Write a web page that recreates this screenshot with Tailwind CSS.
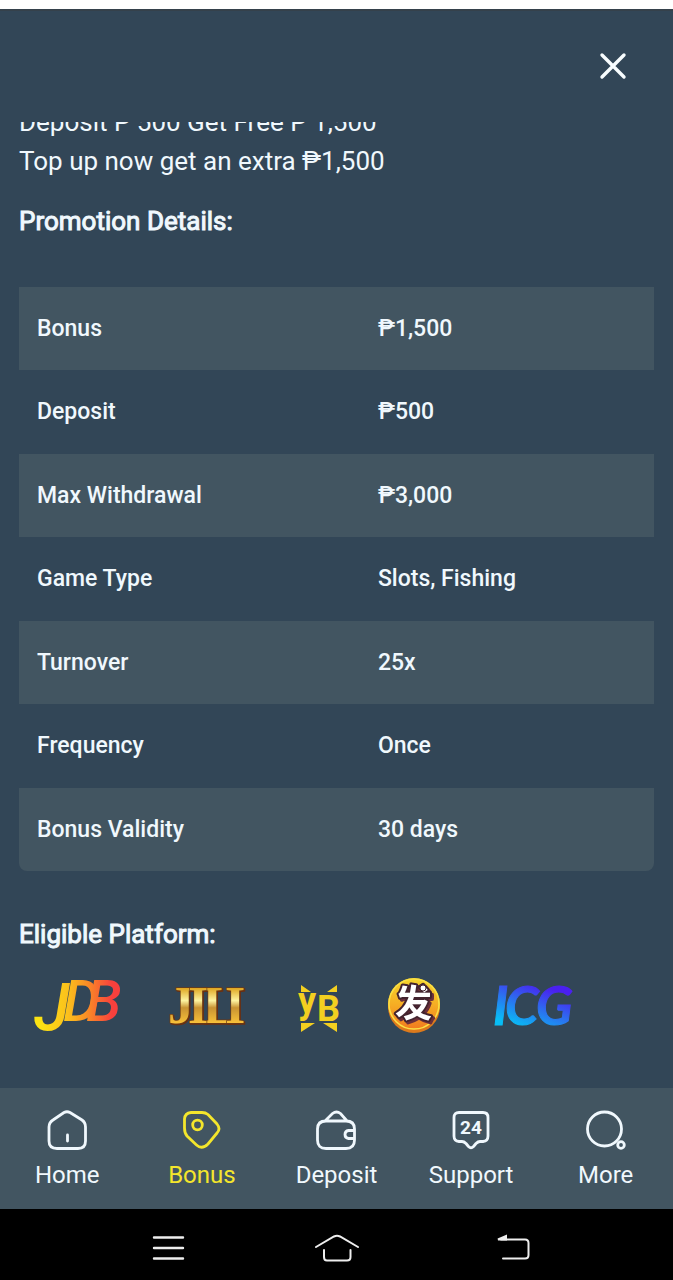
<!DOCTYPE html>
<html lang="en">
<head>
<meta charset="utf-8">
<meta name="viewport" content="width=device-width, initial-scale=1">
<title>Promotion Details</title>
<script src="https://cdn.jsdelivr.net/npm/@tailwindcss/browser@4"></script>
</head>
<body class="flex min-h-screen flex-col bg-[#324657] font-['Roboto','Noto_Sans',sans-serif] text-[#f0f8fd]">
<div class="h-[9px] bg-white"></div>
<header class="flex h-[113px] items-start justify-end border-t-2 border-[#35414b] px-10 pt-[35px]">
  <button type="button" aria-label="Close" class="flex size-10 items-center justify-center">
    <svg class="size-8" viewBox="0 0 32 32" fill="none" stroke="#f8fdff" stroke-width="3.400" stroke-linecap="round"><path d="M5 5 27 27M27 5 5 27"/></svg>
  </button>
</header>
<main class="flex-1 overflow-hidden px-[19px]">
  <div class="-mt-[19px] text-[26px] leading-[39px]">
    <p>Deposit P 500 Get Free P 1,500</p>
    <p>Top up now get an extra ₱1,500</p>
  </div>
  <h2 class="mt-[21px] text-[26px] leading-[39px] font-normal [-webkit-text-stroke:1px]">Promotion Details:</h2>
  <table class="mt-[46px] w-full table-fixed border-separate border-spacing-0 overflow-hidden rounded-b-lg text-left text-[23px] leading-8 font-medium">
    <tbody>
      <tr class="h-[83px] bg-[#425561]"><th scope="row" class="w-[54%] pl-[18px] font-medium">Bonus</th><td class="pl-4">₱1,500</td></tr>
      <tr class="h-[84px]"><th scope="row" class="pl-[18px] font-medium">Deposit</th><td class="pl-4">₱500</td></tr>
      <tr class="h-[83px] bg-[#425561]"><th scope="row" class="pl-[18px] font-medium">Max Withdrawal</th><td class="pl-4">₱3,000</td></tr>
      <tr class="h-[84px]"><th scope="row" class="pl-[18px] font-medium">Game Type</th><td class="pl-4">Slots, Fishing</td></tr>
      <tr class="h-[83px] bg-[#425561]"><th scope="row" class="pl-[18px] font-medium">Turnover</th><td class="pl-4">25x</td></tr>
      <tr class="h-[84px]"><th scope="row" class="pl-[18px] font-medium">Frequency</th><td class="pl-4">Once</td></tr>
      <tr class="h-[83px] bg-[#425561]"><th scope="row" class="pl-[18px] font-medium">Bonus Validity</th><td class="pl-4">30 days</td></tr>
    </tbody>
  </table>
  <h2 class="mt-11 text-[26px] leading-[39px] font-normal [-webkit-text-stroke:1px]">Eligible Platform:</h2>
  <div class="mt-[22px] flex gap-11 pl-[17px]">
    <svg class="h-[60px] w-[86px] overflow-visible" viewBox="0 0 86 60" role="img" aria-label="JDB">
      <defs><linearGradient id="jdb" gradientUnits="userSpaceOnUse" x1="4" y1="0" x2="84" y2="0"><stop offset="0" stop-color="#fbe313"/><stop offset=".35" stop-color="#fbc01c"/><stop offset=".6" stop-color="#f98a26"/><stop offset=".9" stop-color="#f8403d"/></linearGradient></defs>
      <g fill="url(#jdb)" font-family="Roboto" font-weight="500" font-style="italic">
        <text x="-2" y="54" font-size="66">J</text>
        <text x="27" y="45" font-size="58">D</text>
        <text x="50" y="45" font-size="58">B</text>
      </g>
    </svg>
    <svg class="h-[60px] w-[84px] overflow-visible drop-shadow-[1px_1px_0_#6b2f10]" viewBox="0 0 84 60" role="img" aria-label="JILI">
      <defs><linearGradient id="jili" gradientUnits="userSpaceOnUse" x1="0" y1="12" x2="0" y2="48"><stop offset="0" stop-color="#dfa51f"/><stop offset=".35" stop-color="#fdf3a0"/><stop offset=".55" stop-color="#c99332"/><stop offset="1" stop-color="#fbc43a"/></linearGradient></defs>
      <g font-family="Liberation Serif" font-weight="700" font-size="52" fill="url(#jili)" stroke="#6b3b16" stroke-width="1.500" paint-order="stroke"><text x="2" y="47">J</text><text x="37" y="47">L</text><text x="22" y="47">I</text><text x="59" y="47">I</text></g>
    </svg>
    <svg class="h-[60px] w-12" viewBox="0 0 48 60" role="img" aria-label="YB">
      <g fill="#f3cf20"><path d="M7 9 17 16H7ZM43 9 33 16H43ZM7 56V47H21ZM43 56V47H29Z"/>
      <g font-family="Roboto" font-weight="700" font-size="36"><text x="4" y="37">y</text><text x="23" y="45">B</text></g></g>
    </svg>
    <svg class="h-[60px] w-14" viewBox="0 0 56 60" role="img" aria-label="FA">
      <defs><linearGradient id="coin" x1="0" y1="0" x2="0" y2="1"><stop offset="0" stop-color="#f6d52c"/><stop offset=".5" stop-color="#f6ae24"/><stop offset="1" stop-color="#f2791f"/></linearGradient></defs>
      <circle cx="28" cy="31" r="26" fill="#dc7a1c"/><circle cx="28" cy="28" r="26" fill="url(#coin)"/><circle cx="28" cy="28" r="25" fill="none" stroke="#fae044" stroke-width="1.500"/>
      <text x="9" y="41" font-family="Noto Sans CJK SC" font-weight="700" font-size="37" fill="#fff" stroke="#43232e" stroke-width="4" stroke-linejoin="round" paint-order="stroke" class="drop-shadow-[2px_2px_0_#6b2f3a]">发</text>
      <circle cx="37" cy="12" r="3" fill="#fff" stroke="#43232e"/>
    </svg>
    <svg class="h-[60px] w-[90px]" viewBox="0 0 90 60" role="img" aria-label="ICG">
      <defs><linearGradient id="icg" gradientUnits="userSpaceOnUse" x1="35" y1="52" x2="52" y2="8"><stop offset="0" stop-color="#08bdf5"/><stop offset=".5" stop-color="#2b71ef"/><stop offset="1" stop-color="#4a20f0"/></linearGradient></defs>
      <text y="49" font-family="Lato" font-weight="700" font-style="italic" font-size="54" fill="url(#icg)" stroke="url(#icg)"><tspan x="7">I</tspan><tspan x="19">C</tspan><tspan x="50">G</tspan></text>
    </svg>
  </div>
</main>
<nav aria-label="Main" class="grid h-[121px] grid-cols-5 bg-[#425561] pt-[22px] text-center text-2xl">
  <a href="#home" class="flex flex-col items-center gap-[9px]">
    <svg class="size-10" viewBox="0 0 40 40" fill="none" stroke="currentColor" stroke-width="2.800" stroke-linecap="round"><path d="M17 2.500Q20 1 23 2.500L35 10Q38.500 12.500 38.500 17V31Q38.500 38.500 31 38.500H10Q2 38.500 2 31V17Q2 12.500 6 10ZM20.500 25V31"/></svg>Home</a>
  <a href="#bonus" aria-current="page" class="flex flex-col items-center gap-[9px] text-[#f4e62c]">
    <svg class="size-10" viewBox="0 0 40 40" fill="none" stroke="currentColor" stroke-width="2.800"><path d="M9 2.500H20Q23.500 2.500 26 4.500L35 14Q39 19 35 23L26 34Q20 40 14.500 35L5 26Q2.500 23 2.500 18V9Q3 3 9 2.500Z"/><circle cx="15.500" cy="15" r="4.800"/></svg>Bonus</a>
  <a href="#deposit" class="flex flex-col items-center gap-[9px]">
    <svg class="size-10" viewBox="0 0 40 40" fill="none" stroke="currentColor" stroke-width="2.800"><path d="M10 11H30Q38.500 11 38.500 19V30Q38.500 38.500 30 38.500H10Q1.500 38.500 1.500 30V19Q1.500 11 10 11ZM8.500 11.500 16.500 3.500Q20.500 .500 24.500 3.500L31.500 11.500M38 20.500H32.500Q29 21 29 24.500T32.500 28.500H38"/></svg>Deposit</a>
  <a href="#support" class="flex flex-col items-center gap-[9px]">
    <svg class="size-10" viewBox="0 0 40 40" fill="none" stroke="currentColor" stroke-width="2.800" stroke-linejoin="round"><path d="M8 2.500H32Q37 2.500 37 7.500V26Q37 31 32 31.500H29Q27 31.500 25 33.500L22.500 36.500Q20 39 17.500 36.500L15 33.500Q13 31.500 11 31.500H8Q3 31 3 26V7.500Q3 2.500 8 2.500Z"/><text x="20" y="24" text-anchor="middle" font-family="Roboto" font-size="19" font-weight="700" fill="currentColor" stroke="none">24</text></svg>Support</a>
  <a href="#more" class="flex flex-col items-center gap-[9px]">
    <svg class="size-10" viewBox="0 0 40 40" fill="none" stroke="currentColor" stroke-width="2.800"><circle cx="18.500" cy="19" r="17"/><circle cx="35" cy="35" r="3.300"/></svg>More</a>
</nav>
<div class="flex h-[71px] items-center justify-center gap-[108px] bg-black pt-[6px]">
  <button type="button" aria-label="Recent apps"><svg class="h-[30px] w-[60px]" viewBox="0 0 60 30" stroke="#eee" stroke-width="2.400" stroke-linecap="round"><path d="M15 4.500H44M15 15H44M15 25.500H44"/></svg></button>
  <button type="button" aria-label="Home screen"><svg class="h-[30px] w-[60px]" viewBox="0 0 60 30" fill="none" stroke="#eee" stroke-width="2" stroke-linecap="round"><path d="M9 14 27 3.500Q30 2 33 3.500L51 14M17 17V24Q17 27.500 20 27.500H40Q43.500 27.500 43.500 24V17"/></svg></button>
  <button type="button" aria-label="Back"><svg class="h-[30px] w-[60px]" viewBox="0 0 60 30" fill="none" stroke="#eee" stroke-width="2" stroke-linecap="round"><path d="M26 6.500H50Q53.500 6.500 53.500 10V22Q53.500 25.500 50 25.500H28"/><path d="M23 6.500 31 3V6.500Z" fill="#eee"/></svg></button>
</div>
</body>
</html>
